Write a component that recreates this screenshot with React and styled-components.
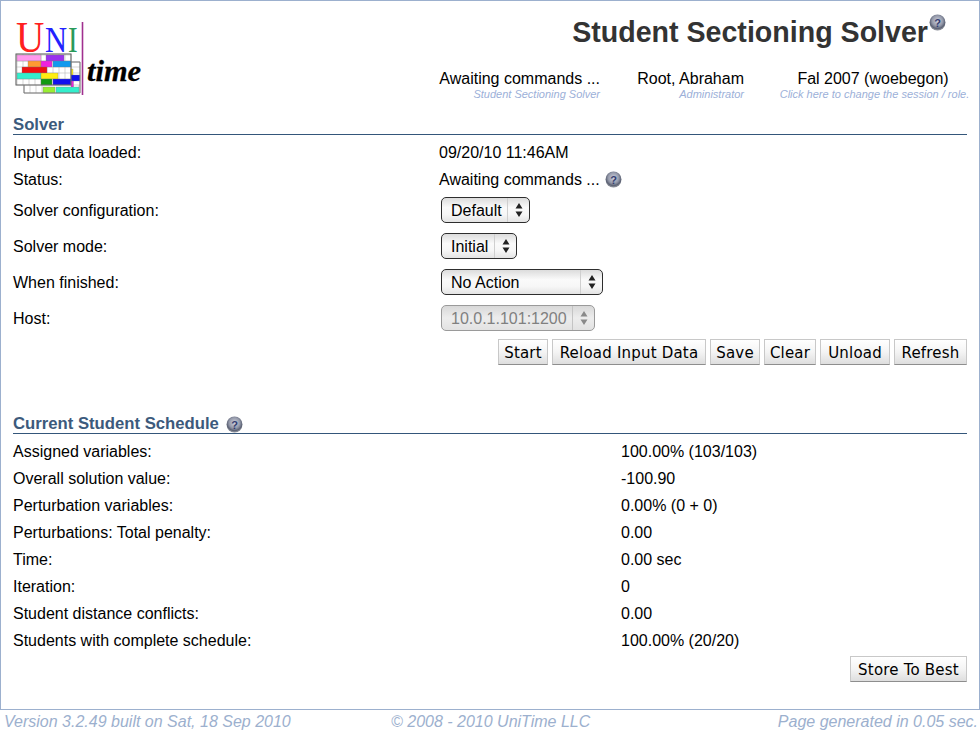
import React from 'react';
import styled, { createGlobalStyle } from 'styled-components';

const GlobalStyle = createGlobalStyle`
   html, body {
      margin: 0;
      padding: 0;
      background: #fff;
      color: #000;
      font-family: "Liberation Sans", Arial, sans-serif;
   }
`;

const Page = styled.div`
   width: 980px;
   height: 733px;
   display: flex;
   flex-direction: column;
   overflow: hidden;
`;

const Frame = styled.div`
   box-sizing: border-box;
   flex: none;
   height: 710px;
   padding: 0 12px 0 12px;
   border: 1px solid #9cb0ce;
`;

const Header = styled.div`
   display: flex;
   height: 115px;
`;

const LogoBox = styled.div`
   width: 200px;
   padding: 8px 0 0 2px;
`;

const HeaderRight = styled.div`
   flex: 1;
   display: flex;
   flex-direction: column;
   align-items: flex-end;
`;

const Title = styled.h1`
   margin: 13px 0 0;
   padding-right: 39px;
   position: relative;
   font-size: 28.6px;
   line-height: 36px;
   font-weight: bold;
   color: #333;
`;

const TitleHelp = styled.span`
   display: flex;
   position: absolute;
   right: 21px;
   top: 0;
`;

const StatusBar = styled.div`
   display: flex;
   margin-top: 20px;
   margin-right: -4px;
`;

const StatusItem = styled.div`
   display: flex;
   flex-direction: column;
   align-items: ${props => props.center ? 'center' : 'flex-end'};
   width: ${props => props.width}px;
   margin-left: ${props => props.gap}px;
`;

const StatusText = styled.div`
   font-size: 16px;
   line-height: 18px;
   padding-right: ${props => props.inset || 0}px;
`;

const StatusSub = styled.div`
   font-size: 11px;
   line-height: 13px;
   font-style: italic;
   color: #9cb0d8;
   white-space: nowrap;
`;

const SectionTitle = styled.div`
   display: flex;
   align-items: center;
   gap: 7px;
   height: 18px;
   margin-top: ${props => props.top || 0}px;
   margin-bottom: 4px;
   border-bottom: 1px solid #34567a;
   font-size: 16.7px;
   font-weight: bold;
   color: #3c5a7c;
`;

const Row = styled.div`
   display: flex;
   align-items: center;
   height: ${props => props.tall ? 36 : 27}px;
   font-size: 16px;
`;

const RowLabel = styled.div`
   width: ${props => props.width}px;
   flex: none;
`;

const RowValue = styled.div`
   display: flex;
   align-items: center;
   gap: 5px;
`;

const Select = styled.div`
   box-sizing: border-box;
   display: flex;
   align-items: stretch;
   width: ${props => props.width}px;
   height: 26px;
   margin: 0 0 2px 2px;
   border: 1px solid ${props => props.disabled ? '#9a9a9a' : '#2e2e2e'};
   border-radius: 5px;
   background: ${props => props.disabled ? 'linear-gradient(#d8d8d8, #ededed 50%, #e2e2e2)' : 'linear-gradient(#dcdcdc, #fafafa 40%, #f6f6f6 70%, #e4e4e4)'};
   color: ${props => props.disabled ? '#808080' : '#000'};
`;

const SelectText = styled.span`
   flex: 1;
   padding-left: 9px;
   line-height: 26px;
   white-space: nowrap;
`;

const SelectArrows = styled.span`
   flex: none;
   width: 21px;
   display: flex;
   align-items: center;
   justify-content: center;
   border-left: 1px solid ${props => props.disabled ? '#c4c4c4' : '#cfcfcf'};
`;

const Buttons = styled.div`
   display: flex;
   justify-content: flex-end;
   gap: 4px;
   margin-top: ${props => props.top}px;
`;

const Button = styled.button`
   box-sizing: border-box;
   width: ${props => props.width}px;
   height: 26px;
   padding: 1px 0 0;
   border: 1px solid #c8c8c8;
   border-bottom-color: #8e8e8e;
   border-radius: 0;
   background: linear-gradient(#ffffff, #f4f4f4 50%, #dedede);
   font-family: "DejaVu Sans", Verdana, sans-serif;
   font-size: 15px;
   letter-spacing: 0.2px;
   white-space: nowrap;
   color: #000;
`;

const Footer = styled.div`
   display: grid;
   grid-template-columns: 387px auto 1fr;
   height: 22px;
   padding: 1px 2px 0 4px;
   font-size: 16px;
   line-height: 22px;
   font-style: italic;
   color: #9cb0ce;
`;

const FooterRight = styled.span`
   text-align: right;
`;

function HelpIcon({ size = 17 }) {
   return (
      <svg width={size} height={size} viewBox="0 0 17 17">
         <defs>
            <radialGradient id="helpBall" cx="0.5" cy="0.4" r="0.55">
               <stop offset="0" stopColor="#cfd2dc" />
               <stop offset="0.6" stopColor="#959aab" />
               <stop offset="0.88" stopColor="#5c6274" />
               <stop offset="1" stopColor="#858994" />
            </radialGradient>
         </defs>
         <circle cx="8.5" cy="8.5" r="8" fill="url(#helpBall)" />
         <text x="8.5" y="12.5" textAnchor="middle" fontSize="11" fontWeight="bold" fontFamily="Liberation Sans, sans-serif" fill="#333d72">?</text>
      </svg>
   );
}

function SelectArrowIcon({ color }) {
   return (
      <svg width="8" height="14" viewBox="0 0 8 14">
         <path d="M4 0 L7.5 5.5 L0.5 5.5 Z M0.5 8.5 L7.5 8.5 L4 14 Z" fill={color} />
      </svg>
   );
}

function Dropdown({ width, disabled, children }) {
   return (
      <Select width={width} disabled={disabled}>
         <SelectText>{children}</SelectText>
         <SelectArrows disabled={disabled}>
            <SelectArrowIcon color={disabled ? '#8a8a8a' : '#222'} />
         </SelectArrows>
      </Select>
   );
}

const logoBlocks = [
   [17, 55, 24, 6, '#ff99ee'],
   [46, 55, 18, 6, '#9933ee'],
   [28, 61, 13, 6, '#ff9933'],
   [41, 61, 11, 6, '#ee22dd'],
   [53, 61, 18, 6, '#1199ee'],
   [22, 67, 25, 6, '#ee1111'],
   [71, 69, 2, 6, '#ffee11'],
   [17, 73, 24, 6, '#33eecc'],
   [41, 73, 17, 6, '#ffee11'],
   [71, 75, 9, 6, '#1111ee'],
   [41, 79, 11, 6, '#119911'],
   [53, 79, 18, 6, '#1111ee'],
   [71, 81, 2.5, 6, '#ee22dd'],
   [43, 87, 12, 6, '#99ee33'],
   [56, 87, 23, 6, '#33eecc'],
];

function Logo() {
   const cols = [];
   for (let x = 17; x <= 71; x += 6) cols.push(x);
   const rows = [55, 61, 67, 73, 79];
   return (
      <svg width="130" height="88" viewBox="15 9 130 88">
         <text transform="translate(16 52) scale(0.89 1)" fontFamily="Liberation Serif, serif" fontSize="44" fill="#ff2020">U</text>
         <text transform="translate(45 52) scale(0.85 1)" fontFamily="Liberation Serif, serif" fontSize="36" fill="#2222ff">N</text>
         <text transform="translate(68 52) scale(0.8 1)" fontFamily="Liberation Serif, serif" fontSize="36" fill="#2a9a5a">I</text>
         <g stroke="#bbb" strokeWidth="0.6" fill="#fff">
            <rect x="24" y="62" width="56" height="31" />
            <rect x="16" y="54" width="55" height="31" />
         </g>
         <g stroke="#b8b8b8" strokeWidth="0.6">
            {cols.map(x => <line key={x} x1={x} x2={x} y1="54" y2="85" />)}
            {rows.map(y => <line key={y} x1="16" x2="71" y1={y} y2={y} />)}
            {[30, 36, 42, 73, 79].map(x => <line key={x} x1={x} x2={x} y1="85" y2="93" />)}
            {[67, 73, 79, 85].map(y => <line key={y} x1="71" x2="80" y1={y} y2={y} />)}
         </g>
         {logoBlocks.map(([x, y, w, h, c]) => <rect key={x + '-' + y} x={x} y={y} width={w} height={h} fill={c} stroke="#777" strokeWidth="0.3" />)}
         <rect x="16" y="54" width="55" height="31" fill="none" stroke="#666" strokeWidth="1" />
         <path d="M71 62 H80 V93 H24 V85" fill="none" stroke="#777" strokeWidth="1" />
         <line x1="82.5" x2="82.5" y1="22" y2="95" stroke="#a0308f" strokeWidth="1.6" />
         <text x="87" y="81" textLength="54" lengthAdjust="spacingAndGlyphs" fontFamily="Liberation Serif, serif" fontStyle="italic" fontWeight="bold" fontSize="29" fill="#000" stroke="#000" strokeWidth="0.3">time</text>
      </svg>
   );
}

const scheduleRows = [
   ['Assigned variables:', '100.00% (103/103)'],
   ['Overall solution value:', '-100.90'],
   ['Perturbation variables:', '0.00% (0 + 0)'],
   ['Perturbations: Total penalty:', '0.00'],
   ['Time:', '0.00 sec'],
   ['Iteration:', '0'],
   ['Student distance conflicts:', '0.00'],
   ['Students with complete schedule:', '100.00% (20/20)'],
];

export default function App() {
   return (
      <Page>
         <GlobalStyle />
         <Frame>
            <Header>
               <LogoBox>
                  <Logo />
               </LogoBox>
               <HeaderRight>
                  <Title>
                     Student Sectioning Solver
                     <TitleHelp><HelpIcon /></TitleHelp>
                  </Title>
                  <StatusBar>
                     <StatusItem width={165}>
                        <StatusText>Awaiting commands ...</StatusText>
                        <StatusSub>Student Sectioning Solver</StatusSub>
                     </StatusItem>
                     <StatusItem width={108} gap={36}>
                        <StatusText>Root, Abraham</StatusText>
                        <StatusSub>Administrator</StatusSub>
                     </StatusItem>
                     <StatusItem width={193} gap={34} center>
                        <StatusText inset={3}>Fal 2007 (woebegon)</StatusText>
                        <StatusSub>Click here to change the session / role.</StatusSub>
                     </StatusItem>
                  </StatusBar>
               </HeaderRight>
            </Header>

            <SectionTitle>Solver</SectionTitle>
            <Row>
               <RowLabel width={426}>Input data loaded:</RowLabel>
               <RowValue>09/20/10 11:46AM</RowValue>
            </Row>
            <Row>
               <RowLabel width={426}>Status:</RowLabel>
               <RowValue>Awaiting commands ... <HelpIcon /></RowValue>
            </Row>
            <Row tall>
               <RowLabel width={426}>Solver configuration:</RowLabel>
               <Dropdown width={89}>Default</Dropdown>
            </Row>
            <Row tall>
               <RowLabel width={426}>Solver mode:</RowLabel>
               <Dropdown width={76}>Initial</Dropdown>
            </Row>
            <Row tall>
               <RowLabel width={426}>When finished:</RowLabel>
               <Dropdown width={162}>No Action</Dropdown>
            </Row>
            <Row tall>
               <RowLabel width={426}>Host:</RowLabel>
               <Dropdown width={154} disabled>10.0.1.101:1200</Dropdown>
            </Row>
            <Buttons top={2}>
               <Button width={50}>Start</Button>
               <Button width={154}>Reload Input Data</Button>
               <Button width={50}>Save</Button>
               <Button width={52}>Clear</Button>
               <Button width={70}>Unload</Button>
               <Button width={73}>Refresh</Button>
            </Buttons>

            <SectionTitle top={50}>
               Current Student Schedule
               <HelpIcon />
            </SectionTitle>
            {scheduleRows.map(([label, value]) => (
               <Row key={label}>
                  <RowLabel width={608}>{label}</RowLabel>
                  <RowValue>{value}</RowValue>
               </Row>
            ))}
            <Buttons top={2}>
               <Button width={117}>Store To Best</Button>
            </Buttons>
         </Frame>
         <Footer>
            <span>Version 3.2.49 built on Sat, 18 Sep 2010</span>
            <span>© 2008 - 2010 UniTime LLC</span>
            <FooterRight>Page generated in 0.05 sec.</FooterRight>
         </Footer>
      </Page>
   );
}
